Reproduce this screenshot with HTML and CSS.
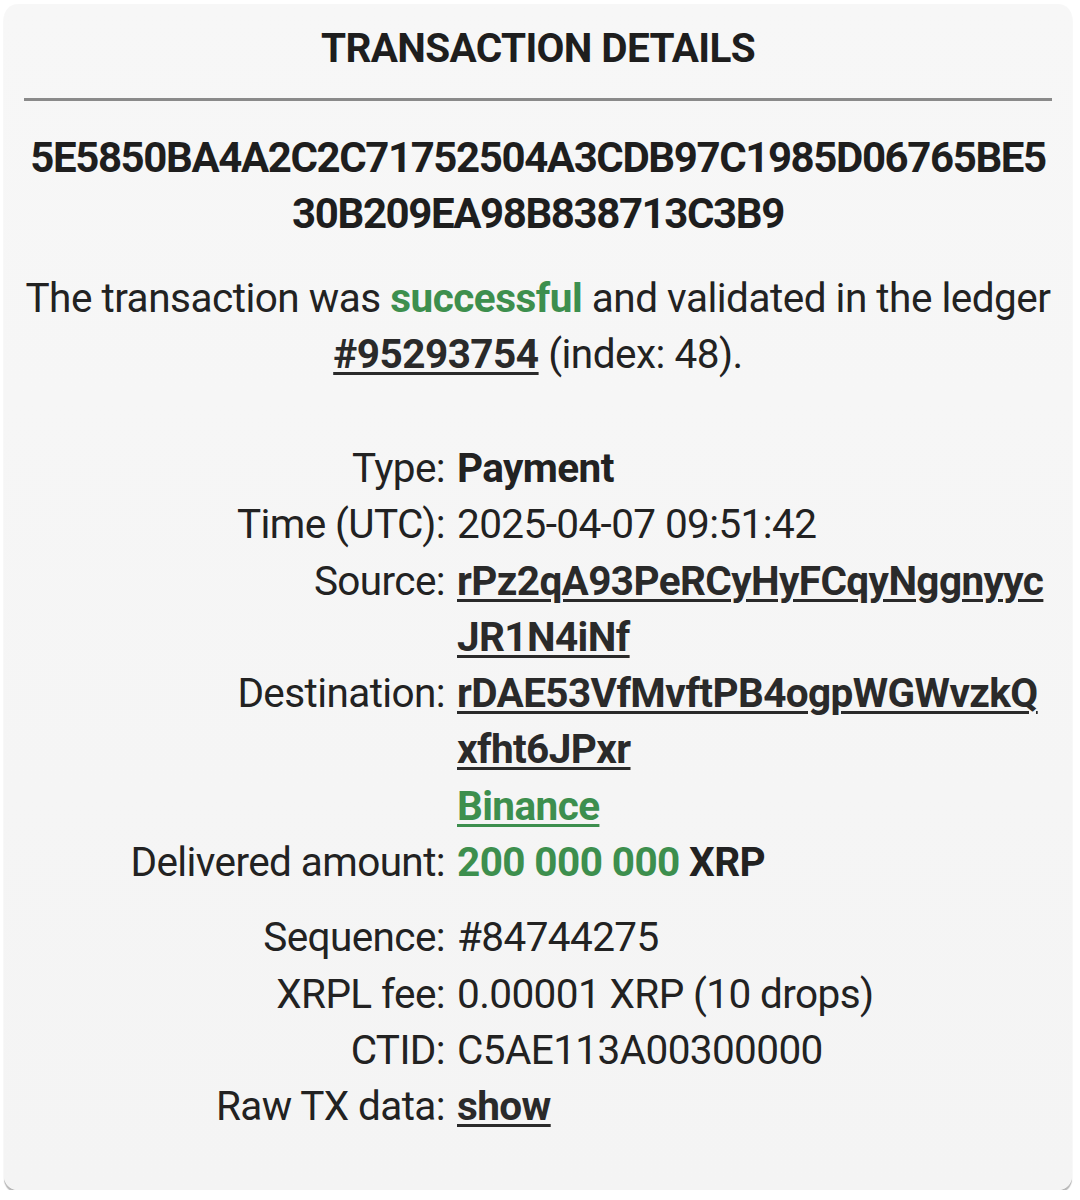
FILE: index.html
```html
<!DOCTYPE html>
<html>
<head>
<meta charset="utf-8">
<link rel="stylesheet" href="styles.css">
</head>
<body>
<div class="card">
  <h1 class="title">TRANSACTION DETAILS</h1>
  <hr class="divider">
  <div class="hash">5E5850BA4A2C2C71752504A3CDB97C1985D06765BE5<br>30B209EA98B838713C3B9</div>
  <p class="summary">The transaction was <span class="green b">successful</span> and validated in the ledger <a class="link" href="#">#95293754</a> (index: 48).</p>
  <table class="details">
    <tr><td class="lbl">Type:</td><td class="val b">Payment</td></tr>
    <tr><td class="lbl">Time (UTC):</td><td class="val">2025-04-07 09:51:42</td></tr>
    <tr><td class="lbl">Source:</td><td class="val"><a class="link addr" href="#">rPz2qA93PeRCyHyFCqyNggnyyc<br>JR1N4iNf</a></td></tr>
    <tr><td class="lbl">Destination:</td><td class="val"><a class="link addr" href="#">rDAE53VfMvftPB4ogpWGWvzkQ<br>xfht6JPxr</a><br><a class="link green" href="#">Binance</a></td></tr>
    <tr><td class="lbl">Delivered amount:</td><td class="val b"><span class="green">200 000 000</span> XRP</td></tr>
  </table>
  <table class="details second">
    <tr><td class="lbl">Sequence:</td><td class="val">#84744275</td></tr>
    <tr><td class="lbl">XRPL fee:</td><td class="val">0.00001 XRP (10 drops)</td></tr>
    <tr><td class="lbl">CTID:</td><td class="val">C5AE113A00300000</td></tr>
    <tr><td class="lbl">Raw TX data:</td><td class="val"><a class="link" href="#">show</a></td></tr>
  </table>
</div>
</body>
</html>
```

FILE: styles.css
```css
html, body {
  margin: 0;
  padding: 0;
  background: #ffffff;
}
body {
  font-family: Roboto, "Liberation Sans", sans-serif;
  color: #222222;
  padding: 4px 8px 0 4px;
}
.card {
  background: linear-gradient(#f7f7f7, #f4f4f4);
  border-radius: 14px;
  height: 1186px;
  box-shadow: 0 3px 1px rgba(0,0,0,0.28);
  padding: 0 20px;
  box-sizing: border-box;
}
.title {
  margin: 0;
  padding-top: 22px;
  font-size: 40.5px;
  line-height: 44px;
  font-weight: 700;
  text-align: center;
  letter-spacing: -0.65px;
  color: #1e1e1e;
}
.divider {
  border: 0;
  height: 3px;
  background: #8a8a8a;
  margin: 28px 0 0 0;
}
.hash {
  margin-top: 29px;
  text-align: center;
  font-size: 42px;
  line-height: 56px;
  font-weight: 700;
  letter-spacing: -1.4px;
  color: #1e1e1e;
}
.summary {
  margin: 28px 0 0 0;
  text-align: center;
  font-size: 40.5px;
  line-height: 56px;
  letter-spacing: -0.5px;
}
.b { font-weight: 700; }
.green { color: #3d8f4e; }
.link {
  color: #2a2a2a;
  font-weight: 700;
  text-decoration: underline;
  text-decoration-thickness: 3px;
  text-underline-offset: 4px;
}
.link.green { color: #3d8f4e; }
.details {
  width: 100%;
  border-collapse: collapse;
  margin: 58px 0 0 0;
  font-size: 40.5px;
  line-height: 56.3px;
  letter-spacing: -0.6px;
}
.details.second { margin-top: 19px; }
.lbl {
  width: 421px;
  text-align: right;
  padding: 0 12px 0 0;
  vertical-align: top;
  white-space: nowrap;
}
.val {
  padding: 0;
  vertical-align: top;
}
.addr { white-space: nowrap; }
```
